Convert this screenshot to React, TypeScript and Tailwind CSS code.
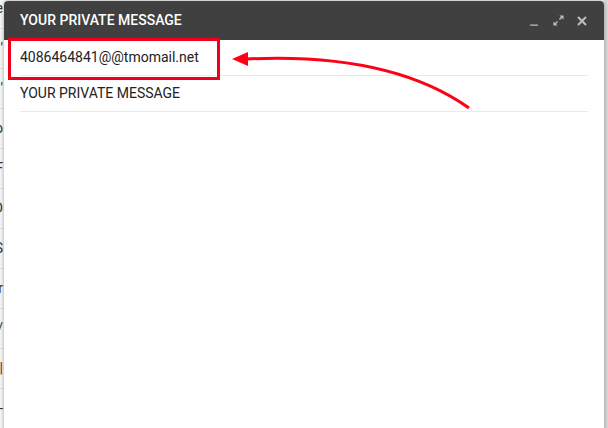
import { Minus } from "lucide-react";

// ======== Lignes de la liste en arrière-plan (on ne voit que le bout)
const bgRows = ["e", "'", "'", "o", "F", "D", "S", "r", "t/", "o|", "-"];

function Expand() {
  return (
    <svg width="11" height="11" viewBox="0 0 12 12" fill="#bdbdbd">
      <path d="M7 0.5h4.5V5L9.8 3.3 7.6 5.5 6.5 4.4l2.2-2.2z" />
      <path d="M5 11.5H0.5V7l1.7 1.7 2.2-2.2 1.1 1.1-2.2 2.2z" />
    </svg>
  );
}

function Close() {
  return (
    <svg width="10" height="10" viewBox="0 0 10 10" stroke="#bdbdbd" strokeWidth="2">
      <path d="M1 1l8 8M9 1l-8 8" />
    </svg>
  );
}

// ======== Composant principal
export default function App() {
  return (
    <div
      className="relative w-[608px] h-[428px] overflow-hidden bg-[#f7f7f7]"
      style={{ fontFamily: "Roboto, 'Liberation Sans', sans-serif" }}
    >
      {/* liste derrière la fenêtre */}
      <div className="flex flex-col -mt-[11px]">
        {bgRows.map((t, i) => (
          <div
            key={i}
            className="h-10 shrink-0 flex items-center border-b border-[#e3e3e3]"
          >
            <div className="w-[3px] flex justify-end whitespace-nowrap text-[14px] text-[#333]">
              {t}
            </div>
          </div>
        ))}
      </div>

      {/* bande grise à droite */}
      <div className="absolute right-0 top-0 h-full w-[4px] bg-[#d8dad9]" />

      {/* fenêtre modale */}
      <div className="absolute left-[4px] top-[1px] w-[600px] h-[440px] bg-white rounded-t-[4px] shadow-[0_0_4px_rgba(0,0,0,0.35)] flex flex-col">
        <div className="h-[39px] shrink-0 bg-[#404040] rounded-t-[4px] flex items-center justify-between pl-4 pr-4">
          <span className="text-white text-[14px] font-medium">
            YOUR PRIVATE MESSAGE
          </span>
          <div className="flex items-center gap-[13px] mr-[1px]">
            <Minus size={12} strokeWidth={2.5} color="#bdbdbd" className="mt-[9px]" />
            <Expand />
            <Close />
          </div>
        </div>

        <div className="flex flex-col px-4">
          <div className="h-[36px] flex items-center border-b border-[#e8eaed] text-[14px] text-[#222]">
            4086464841@@tmomail.net
          </div>
          <div className="h-[36px] flex items-center border-b border-[#e8eaed] text-[14px] text-[#222]">
            YOUR PRIVATE MESSAGE
          </div>
        </div>
      </div>

      {/* annotation : cadre rouge */}
      <div className="absolute left-[8px] top-[38px] w-[212px] h-[42px] border-[3px] border-[#f0001c]" />

      {/* annotation : flèche */}
      <svg className="absolute left-0 top-0" width="608" height="428">
        <path
          d="M469 108 Q390 52 246 59"
          fill="none"
          stroke="#ff0016"
          strokeWidth="3"
        />
        <polygon points="232,59 248,52 248,66" fill="#ff0016" />
      </svg>
    </div>
  );
}
